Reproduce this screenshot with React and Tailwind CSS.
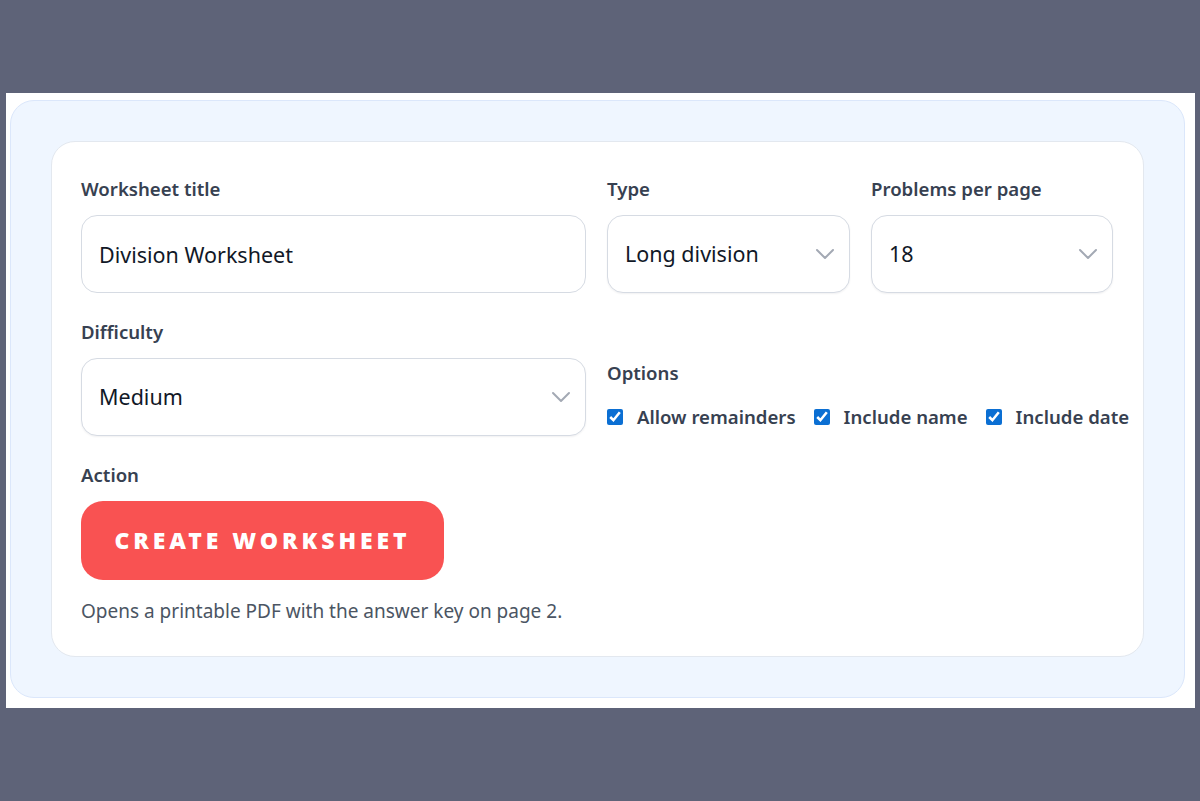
import { useState } from "react";

const Chevron = () => (
  <svg
    className="pointer-events-none absolute right-[15px] top-1/2 -translate-y-1/2"
    width="20"
    height="12"
    viewBox="0 0 20 12"
    fill="none"
  >
    <path d="M2 2l8 8 8-8" stroke="#a3a9b4" strokeWidth="2" strokeLinecap="round" strokeLinejoin="round" />
  </svg>
);

const Field = ({ label, children }) => (
  <div className="flex flex-col">
    <label className="mb-3 text-[18.6px] leading-7 font-semibold text-[#374151]">{label}</label>
    {children}
  </div>
);

const SelectBox = ({ value, options, onChange }) => (
  <div className="relative">
    <select
      value={value}
      onChange={(e) => onChange(e.target.value)}
      className="h-[78px] w-full appearance-none rounded-2xl border border-[#d6dbe3] bg-white pl-[17px] pr-12 text-[21.5px] text-[#111827] shadow-[0_1px_2px_rgba(15,23,42,0.06)] outline-none"
    >
      {options.map((o) => (
        <option key={o}>{o}</option>
      ))}
    </select>
    <Chevron />
  </div>
);

const Check = ({ label, checked, onChange }) => (
  <label className="flex items-center gap-[14px] whitespace-nowrap text-[18.6px] leading-7 font-semibold text-[#374151]">
    <input
      type="checkbox"
      checked={checked}
      onChange={onChange}
      className="m-0 h-4 w-4 accent-[#0b6fd3]"
    />
    {label}
  </label>
);

export default function App() {
  const [title, setTitle] = useState("Division Worksheet");
  const [type, setType] = useState("Long division");
  const [perPage, setPerPage] = useState("18");
  const [difficulty, setDifficulty] = useState("Medium");
  const [opts, setOpts] = useState({ remainders: true, name: true, date: true });

  const toggle = (k) => setOpts((prev) => ({ ...prev, [k]: !prev[k] }));

  return (
    <div className="min-h-screen bg-[#5e6378] pt-[93px] pl-[6px]" style={{ fontFamily: '"Noto Sans", "Open Sans", sans-serif' }}>
      <div className="w-[1189px] bg-white pt-[7px] pl-1 pr-[10px] pb-[10px]">
        <div className="rounded-3xl border border-[#dbe7fb] bg-[#eff6ff] p-10">
          <div className="rounded-3xl border border-[#e3e8ef] bg-white px-[29px] pt-[33px] pb-[31px]">
            <div className="grid grid-cols-[505px_243px_242px] gap-x-[21px] gap-y-[25px]">
              <Field label="Worksheet title">
                <input
                  value={title}
                  onChange={(e) => setTitle(e.target.value)}
                  className="h-[78px] w-full rounded-2xl border border-[#d6dbe3] bg-white px-[17px] text-[21.5px] text-[#111827] outline-none"
                />
              </Field>
              <Field label="Type">
                <SelectBox value={type} onChange={setType} options={["Long division", "Short division"]} />
              </Field>
              <Field label="Problems per page">
                <SelectBox value={perPage} onChange={setPerPage} options={["12", "18", "24"]} />
              </Field>

              <Field label="Difficulty">
                <SelectBox value={difficulty} onChange={setDifficulty} options={["Easy", "Medium", "Hard"]} />
              </Field>
              <div className="col-span-2 flex flex-col pt-[41px]">
                <span className="mb-4 text-[18.6px] leading-7 font-semibold text-[#374151]">Options</span>
                <div className="flex items-center gap-[18px]">
                  <Check label="Allow remainders" checked={opts.remainders} onChange={() => toggle("remainders")} />
                  <Check label="Include name" checked={opts.name} onChange={() => toggle("name")} />
                  <Check label="Include date" checked={opts.date} onChange={() => toggle("date")} />
                </div>
              </div>

              <div className="col-span-3 flex flex-col items-start">
                <span className="mb-3 text-[18.6px] leading-7 font-semibold text-[#374151]">Action</span>
                <button className="h-[79px] w-[363px] rounded-[22px] bg-[#f95252] text-[23px] font-black uppercase tracking-[0.17em] text-white">
                  Create worksheet
                </button>
                <p className="mt-[17px] text-[19px] leading-7 text-[#4b5563]">
                  Opens a printable PDF with the answer key on page 2.
                </p>
              </div>
            </div>
          </div>
        </div>
      </div>
    </div>
  );
}
